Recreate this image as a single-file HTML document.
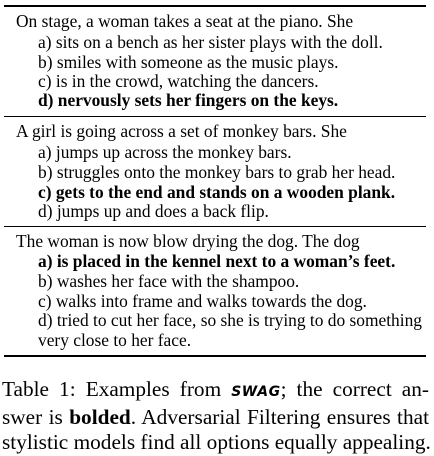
<html><head><style>
body{margin:0;width:434px;height:456px;background:#fff;position:relative;font-family:"Liberation Serif",serif;color:#000;overflow:hidden}
.l{position:absolute;font-size:17.4px;line-height:20px;white-space:nowrap}
.a{left:16px}.i{left:38px}
.r{position:absolute;left:4px;width:422px;background:#000}
.c{position:absolute;left:2px;width:427px;font-size:21.3px;line-height:26px;text-align:justify;text-align-last:justify;white-space:nowrap}
b{font-weight:bold}
</style></head><body>
<div class="r" style="top:5px;height:1.5px"></div>
<div class="l a" style="top:11px">On stage, a woman takes a seat at the piano. She</div>
<div class="l i" style="top:32px">a) sits on a bench as her sister plays with the doll.</div>
<div class="l i" style="top:52px">b) smiles with someone as the music plays.</div>
<div class="l i" style="top:71px">c) is in the crowd, watching the dancers.</div>
<div class="l i" style="top:90px"><b>d) nervously sets her fingers on the keys.</b></div>
<div class="r" style="top:116px;height:1px"></div>
<div class="l a" style="top:121px">A girl is going across a set of monkey bars. She</div>
<div class="l i" style="top:142px">a) jumps up across the monkey bars.</div>
<div class="l i" style="top:162px">b) struggles onto the monkey bars to grab her head.</div>
<div class="l i" style="top:182px"><b>c) gets to the end and stands on a wooden plank.</b></div>
<div class="l i" style="top:201px">d) jumps up and does a back flip.</div>
<div class="r" style="top:226px;height:1px"></div>
<div class="l a" style="top:231px">The woman is now blow drying the dog. The dog</div>
<div class="l i" style="top:251px"><b>a) is placed in the kennel next to a woman’s feet.</b></div>
<div class="l i" style="top:271px">b) washes her face with the shampoo.</div>
<div class="l i" style="top:291px">c) walks into frame and walks towards the dog.</div>
<div class="l i" style="top:310px">d) tried to cut her face, so she is trying to do something</div>
<div class="l i" style="top:330px">very close to her face.</div>
<div class="r" style="top:355px;height:1.5px"></div>
<div class="c" style="top:376px">Table 1: Examples from <b style="font-family:'DejaVu Sans',sans-serif;font-style:italic;font-size:14px;letter-spacing:0.5px">SWAG</b>; the correct an-</div>
<div class="c" style="top:404px">swer is <b>bolded</b>. Adversarial Filtering ensures that</div>
<div class="c" style="top:429px">stylistic models find all options equally appealing.</div>
</body></html>
